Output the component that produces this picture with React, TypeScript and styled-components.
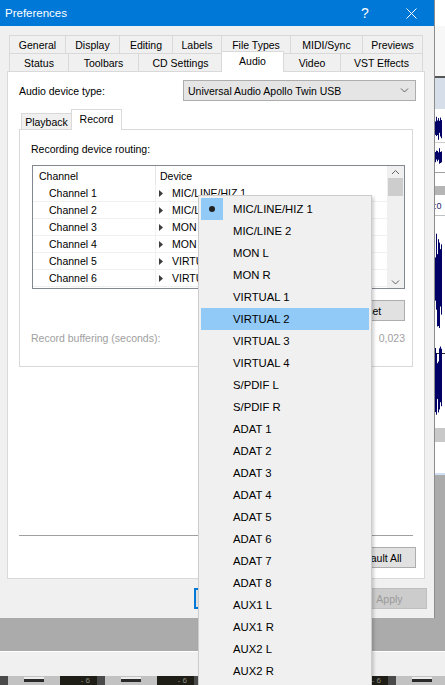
import React from "react"
import styled, { createGlobalStyle } from "styled-components"

const GlobalStyle = createGlobalStyle`
  html, body { margin:0; padding:0; }
  body {
    font-family:"Liberation Sans", Arial, sans-serif;
    font-size:10.5px;
    color:#000;
    background:#f0f0f0;
  }
  * { box-sizing:border-box; }
`

const TAB_ROWS = [
  [
    { label: 'General', width: 56 },
    { label: 'Display', width: 54 },
    { label: 'Editing', width: 53 },
    { label: 'Labels', width: 49 },
    { label: 'File Types', width: 69 },
    { label: 'MIDI/Sync', width: 72 },
    { label: 'Previews', width: 61 },
  ],
  [
    { label: 'Status', width: 59 },
    { label: 'Toolbars', width: 70 },
    { label: 'CD Settings', width: 84 },
    { label: 'Audio', width: 61, active: true },
    { label: 'Video', width: 57 },
    { label: 'VST Effects', width: 83 },
  ],
]

const CHANNELS = [
  ['Channel 1', 'MIC/LINE/HIZ 1'],
  ['Channel 2', 'MIC/LINE 2'],
  ['Channel 3', 'MON L'],
  ['Channel 4', 'MON R'],
  ['Channel 5', 'VIRTUAL 1'],
  ['Channel 6', 'VIRTUAL 2'],
]

const MENU_ITEMS = [
  'MIC/LINE/HIZ 1', 'MIC/LINE 2', 'MON L', 'MON R',
  'VIRTUAL 1', 'VIRTUAL 2', 'VIRTUAL 3', 'VIRTUAL 4',
  'S/PDIF L', 'S/PDIF R',
  'ADAT 1', 'ADAT 2', 'ADAT 3', 'ADAT 4', 'ADAT 5', 'ADAT 6', 'ADAT 7', 'ADAT 8',
  'AUX1 L', 'AUX1 R', 'AUX2 L', 'AUX2 R',
]

// deterministic spiky columns for the waveform in the app behind the dialog
const waveColumns = (cy: number, amp: number, seed: number) =>
  Array.from({ length: 8 }, (_, x) => {
    const r = Math.abs(Math.sin((x + 1) * seed * 12.9898) * 43758.5453) % 1
    const up = amp * (0.45 + 0.55 * r)
    const down = amp * (0.4 + 0.6 * ((r * 7.3) % 1))
    return { x, y: cy - up, h: up + down }
  })

function WaveStrip() {
  const waves = [
    ...waveColumns(128, 12, 1.7),
    ...waveColumns(156, 8, 2.3),
    ...waveColumns(280, 50, 3.1),
    ...waveColumns(380, 36, 4.7),
  ]
  return (
    <svg width="11" height="480" viewBox="0 0 11 480">
      <rect x="0" y="0" width="11" height="480" fill="#ffffff" />
      <rect x="0" y="26" width="11" height="50" fill="#f7f7f7" />
      <rect x="0" y="76" width="11" height="2" fill="#555555" />
      <rect x="0" y="78" width="11" height="31" fill="#d6dee9" />
      <rect x="0" y="142" width="11" height="1" fill="#d0d0d0" />
      <rect x="0" y="172" width="11" height="1" fill="#a0a0a0" />
      <rect x="0" y="186" width="11" height="9" fill="#b5b5b5" />
      <text x="0" y="209" fontSize="9" fill="#1a1a6e" fontFamily="Liberation Sans, sans-serif">:0</text>
      <rect x="0" y="215" width="11" height="1" fill="#c0c0c0" />
      <rect x="0" y="353" width="11" height="1" fill="#303030" />
      {waves.map((c, i) => (
        <rect key={i} x={c.x} y={c.y} width="1" height={c.h} fill="#000066" />
      ))}
      <rect x="0" y="428" width="11" height="14" fill="#c8c8c8" />
      <rect x="0" y="473" width="11" height="2" fill="#cfe0f5" />
      <rect x="0" y="475" width="11" height="5" fill="#ababab" />
    </svg>
  )
}

function Chevron({ dir }: { dir: 'up' | 'down' }) {
  const pts = dir === 'up' ? '1,5 4.5,1.5 8,5' : '1,1.5 4.5,5 8,1.5'
  return (
    <svg width="9" height="7" viewBox="0 0 9 7">
      <polyline points={pts} fill="none" stroke="#606060" strokeWidth="1" />
    </svg>
  )
}

function RowArrow() {
  return (
    <svg width="5" height="7" viewBox="0 0 5 7">
      <polygon points="0,0 4,3.5 0,7" fill="#3c3c3c" />
    </svg>
  )
}

export default function App() {
  return (
    <Screen>
      <GlobalStyle />
      <Backdrop>
        <TrackArea>
          <WaveStrip />
        </TrackArea>
        <GrayArea />
        <StatusBar />
        <FaderStrip>
          {Array.from({ length: 5 }, (_, i) => (
            <React.Fragment key={i}>
              <FaderGap />
              <FaderCell><FaderKnob /></FaderCell>
              <MeterCell>- 6</MeterCell>
            </React.Fragment>
          ))}
        </FaderStrip>
      </Backdrop>

      <Dialog>
        <TitleBar>
          <TitleText>Preferences</TitleText>
          <CaptionButton>?</CaptionButton>
          <CaptionButton>
            <svg width="11" height="11" viewBox="0 0 11 11">
              <path d="M0.5 0.5 L10.5 10.5 M10.5 0.5 L0.5 10.5" stroke="#ffffff" strokeWidth="1" />
            </svg>
          </CaptionButton>
        </TitleBar>

        <DialogBody>
          <TabStrip>
            {TAB_ROWS.map((row, r) => (
              <TabRow key={r}>
                {row.map(t => (
                  <Tab key={t.label} $width={t.width} $active={!!t.active}>
                    {t.label}
                  </Tab>
                ))}
              </TabRow>
            ))}
          </TabStrip>

          <TabPage>
            <DeviceRow>
              <span>Audio device type:</span>
              <Combo>
                <span>Universal Audio Apollo Twin USB</span>
                <Chevron dir="down" />
              </Combo>
            </DeviceRow>

            <InnerTabs>
              <InnerTabStrip>
                <InnerTab $active={false}>Playback</InnerTab>
                <InnerTab $active={true}>Record</InnerTab>
              </InnerTabStrip>
              <InnerPanel>
                <SectionLabel>Recording device routing:</SectionLabel>
                <ListBox>
                  <ListGrid>
                    <ListHeader>
                      <ChannelCell $header>Channel</ChannelCell>
                      <DeviceCell $header>Device</DeviceCell>
                    </ListHeader>
                    {CHANNELS.map(([ch, dev]) => (
                      <ListRow key={ch}>
                        <ChannelCell>{ch}</ChannelCell>
                        <DeviceCell>
                          <RowArrow />
                          <DeviceName>{dev}</DeviceName>
                        </DeviceCell>
                      </ListRow>
                    ))}
                  </ListGrid>
                  <ScrollBar>
                    <ScrollArrow><Chevron dir="up" /></ScrollArrow>
                    <ScrollTrack><ScrollThumb /></ScrollTrack>
                    <ScrollArrow><Chevron dir="down" /></ScrollArrow>
                  </ScrollBar>
                </ListBox>
                <ResetRow>
                  <Button $width={75}>Reset</Button>
                </ResetRow>
                <BufferRow>
                  <span>Record buffering (seconds):</span>
                  <span>0,023</span>
                </BufferRow>
              </InnerPanel>
            </InnerTabs>

            <PageSpacer />
            <Separator />
            <PageFooter>
              <Button $width={76}>Default All</Button>
            </PageFooter>
          </TabPage>

          <DialogButtons>
            <Button $width={75} $focused>OK</Button>
            <Button $width={75}>Cancel</Button>
            <Button $width={75} $disabled>Apply</Button>
          </DialogButtons>
        </DialogBody>
      </Dialog>

      <PopupMenu>
        {MENU_ITEMS.map((item, i) => (
          <MenuItem key={item} $hover={i === 5}>
            <CheckCell $checked={i === 0}>{i === 0 && <CheckDot />}</CheckCell>
            <MenuLabel>{item}</MenuLabel>
          </MenuItem>
        ))}
      </PopupMenu>
    </Screen>
  )
}

const Screen = styled.div`
  position:relative;
  width:445px;
  height:685px;
  overflow:hidden;
  background:#f0f0f0;
`
const Backdrop = styled.div`
  display:flex;
  flex-direction:column;
  width:100%;
  height:100%;
`
const TrackArea = styled.div`
  height:480px;
  display:flex;
  justify-content:flex-end;
  background:#ffffff;
  svg { display:block; }
`
const GrayArea = styled.div`
  height:171px;
  background:#ababab;
`
const StatusBar = styled.div`
  height:25px;
  background:#f0f0f0;
  border-top:1px solid #ffffff;
`
const FaderStrip = styled.div`
  flex:1;
  display:flex;
  background:#3a3a3a;
  overflow:hidden;
`
const FaderGap = styled.div`
  width:8px;
  flex:none;
  background:#4a4a4a;
`
const FaderCell = styled.div`
  width:52px;
  flex:none;
  display:flex;
  justify-content:center;
  background:#c2c2c2;
`
const FaderKnob = styled.div`
  width:20px;
  height:5px;
  margin-top:1px;
  background:#ececec;
  border-bottom:3px solid #2a2a2a;
`
const MeterCell = styled.div`
  width:37px;
  flex:none;
  background:#1e1e16;
  color:#8a8a80;
  font-size:8px;
  line-height:10px;
  text-align:right;
  padding-right:7px;
  white-space:nowrap;
`

const Dialog = styled.div`
  position:absolute;
  top:0;
  left:0;
  width:435px;
  height:618px;
  display:flex;
  flex-direction:column;
  background:#f0f0f0;
  border-right:1px solid #8c8c8c;
`
const TitleBar = styled.div`
  height:26px;
  display:flex;
  align-items:center;
  background:#0078d7;
  color:#ffffff;
`
const TitleText = styled.div`
  flex:1;
  padding-left:5px;
  font-size:11.5px;
`
const CaptionButton = styled.div`
  width:46px;
  height:26px;
  display:flex;
  align-items:center;
  justify-content:center;
  font-size:14px;
`
const DialogBody = styled.div`
  flex:1;
  display:flex;
  flex-direction:column;
  padding:9px 9px 0 7px;
`
const TabStrip = styled.div`
  display:flex;
  flex-direction:column;
  padding:0 2px;
`
const TabRow = styled.div`
  display:flex;
  height:18px;
`
const Tab = styled.div<{ $width: number; $active: boolean }>`
  position:relative;
  width:${p => p.$active ? p.$width + 2 : p.$width}px;
  height:${p => p.$active ? 21 : 18}px;
  margin:${p => p.$active ? '-2px -1px -1px -1px' : '0'};
  z-index:${p => p.$active ? 2 : 0};
  display:flex;
  align-items:center;
  justify-content:center;
  padding-bottom:${p => p.$active ? 3 : 0}px;
  background:${p => p.$active ? '#ffffff' : '#f0f0f0'};
  border:1px solid #d9d9d9;
  border-right:${p => p.$active ? '1px solid #d9d9d9' : 'none'};
  border-bottom:none;
  &:last-child { border-right:1px solid #d9d9d9; }
`
const TabPage = styled.div`
  position:relative;
  z-index:1;
  height:508px;
  display:flex;
  flex-direction:column;
  background:#ffffff;
  border:1px solid #d9d9d9;
`
const DeviceRow = styled.div`
  display:flex;
  align-items:center;
  justify-content:space-between;
  padding:8px 8px 0 11px;
`
const Combo = styled.div`
  width:233px;
  height:21px;
  display:flex;
  align-items:center;
  justify-content:space-between;
  padding:0 6px 0 4px;
  background:#e5e5e5;
  border:1px solid #adadad;
  svg { display:block; }
`
const InnerTabs = styled.div`
  margin:8px 11px 0 11px;
`
const InnerTabStrip = styled.div`
  display:flex;
  align-items:flex-end;
  height:20px;
  padding-left:2px;
`
const InnerTab = styled.div<{ $active: boolean }>`
  position:relative;
  z-index:${p => p.$active ? 2 : 0};
  width:51px;
  height:${p => p.$active ? 21 : 16}px;
  margin-bottom:${p => p.$active ? -1 : 0}px;
  margin-left:${p => p.$active ? -1 : 0}px;
  display:flex;
  align-items:center;
  justify-content:center;
  padding-bottom:${p => p.$active ? 3 : 0}px;
  background:${p => p.$active ? '#ffffff' : '#f0f0f0'};
  border:1px solid #d9d9d9;
  border-bottom:none;
`
const InnerPanel = styled.div`
  position:relative;
  z-index:1;
  height:238px;
  display:flex;
  flex-direction:column;
  background:#ffffff;
  border:1px solid #d9d9d9;
`
const SectionLabel = styled.div`
  padding:13px 0 0 11px;
  line-height:13px;
`
const ListBox = styled.div`
  height:124px;
  margin:9px 7px 0 12px;
  display:flex;
  border:1px solid #828790;
  background:#ffffff;
  overflow:hidden;
`
const ListGrid = styled.div`
  flex:1;
  display:flex;
  flex-direction:column;
`
const ListHeader = styled.div`
  height:19px;
  flex:none;
  display:flex;
  align-items:center;
`
const ListRow = styled.div`
  height:17px;
  flex:none;
  display:flex;
  align-items:center;
  border-bottom:1px solid #f0f0f0;
`
const ChannelCell = styled.div<{ $header?: boolean }>`
  width:123px;
  height:100%;
  display:flex;
  align-items:center;
  padding-left:${p => p.$header ? 6 : 16}px;
  border-right:1px solid ${p => p.$header ? '#e5e5e5' : '#f0f0f0'};
`
const DeviceCell = styled.div<{ $header?: boolean }>`
  flex:1;
  display:flex;
  align-items:center;
  padding-left:${p => p.$header ? 4 : 3}px;
  svg { display:block; }
`
const DeviceName = styled.span`
  margin-left:8px;
`
const ScrollBar = styled.div`
  width:17px;
  display:flex;
  flex-direction:column;
  background:#f0f0f0;
`
const ScrollArrow = styled.div`
  height:12px;
  display:flex;
  align-items:center;
  justify-content:center;
  svg { display:block; }
`
const ScrollTrack = styled.div`
  flex:1;
  padding:0 1px;
`
const ScrollThumb = styled.div`
  height:18px;
  background:#cdcdcd;
`
const ResetRow = styled.div`
  display:flex;
  justify-content:flex-end;
  margin-top:11px;
  padding-right:7px;
`
const BufferRow = styled.div`
  display:flex;
  justify-content:space-between;
  margin-top:10px;
  padding:0 7px 0 11px;
  line-height:14px;
  color:#a0a0a0;
`
const PageSpacer = styled.div`
  flex:1;
`
const Separator = styled.div`
  margin:0 11px;
  border-top:1px solid #a0a0a0;
`
const PageFooter = styled.div`
  display:flex;
  justify-content:flex-end;
  padding:11px 8px 10px 0;
`
const Button = styled.div<{ $width: number; $focused?: boolean; $disabled?: boolean }>`
  width:${p => p.$width}px;
  height:21px;
  display:flex;
  align-items:center;
  justify-content:center;
  background:${p => p.$disabled ? '#cccccc' : '#e1e1e1'};
  color:${p => p.$disabled ? '#9a9a9a' : '#000000'};
  border:${p => p.$focused ? '2px solid #0078d7' : p.$disabled ? '1px solid #bfbfbf' : '1px solid #adadad'};
`
const DialogButtons = styled.div`
  display:flex;
  justify-content:flex-end;
  gap:4px;
  padding:9px 0 9px 0;
  margin-right:-2px;
`

const PopupMenu = styled.div`
  position:absolute;
  left:198px;
  top:195px;
  width:174px;
  height:492px;
  padding:2px;
  display:flex;
  flex-direction:column;
  background:#f0f0f0;
  border:1px solid #cccccc;
  box-shadow:2px 2px 3px rgba(0,0,0,0.18);
  z-index:10;
`
const MenuItem = styled.div<{ $hover: boolean }>`
  height:22px;
  flex:none;
  display:flex;
  align-items:center;
  background:${p => p.$hover ? '#91c9f7' : 'transparent'};
`
const CheckCell = styled.div<{ $checked: boolean }>`
  width:22px;
  height:22px;
  display:flex;
  align-items:center;
  justify-content:center;
  background:${p => p.$checked ? '#91c9f7' : 'transparent'};
`
const CheckDot = styled.div`
  width:6px;
  height:6px;
  border-radius:50%;
  background:#202020;
`
const MenuLabel = styled.span`
  margin-left:10px;
  font-size:11.3px;
`
